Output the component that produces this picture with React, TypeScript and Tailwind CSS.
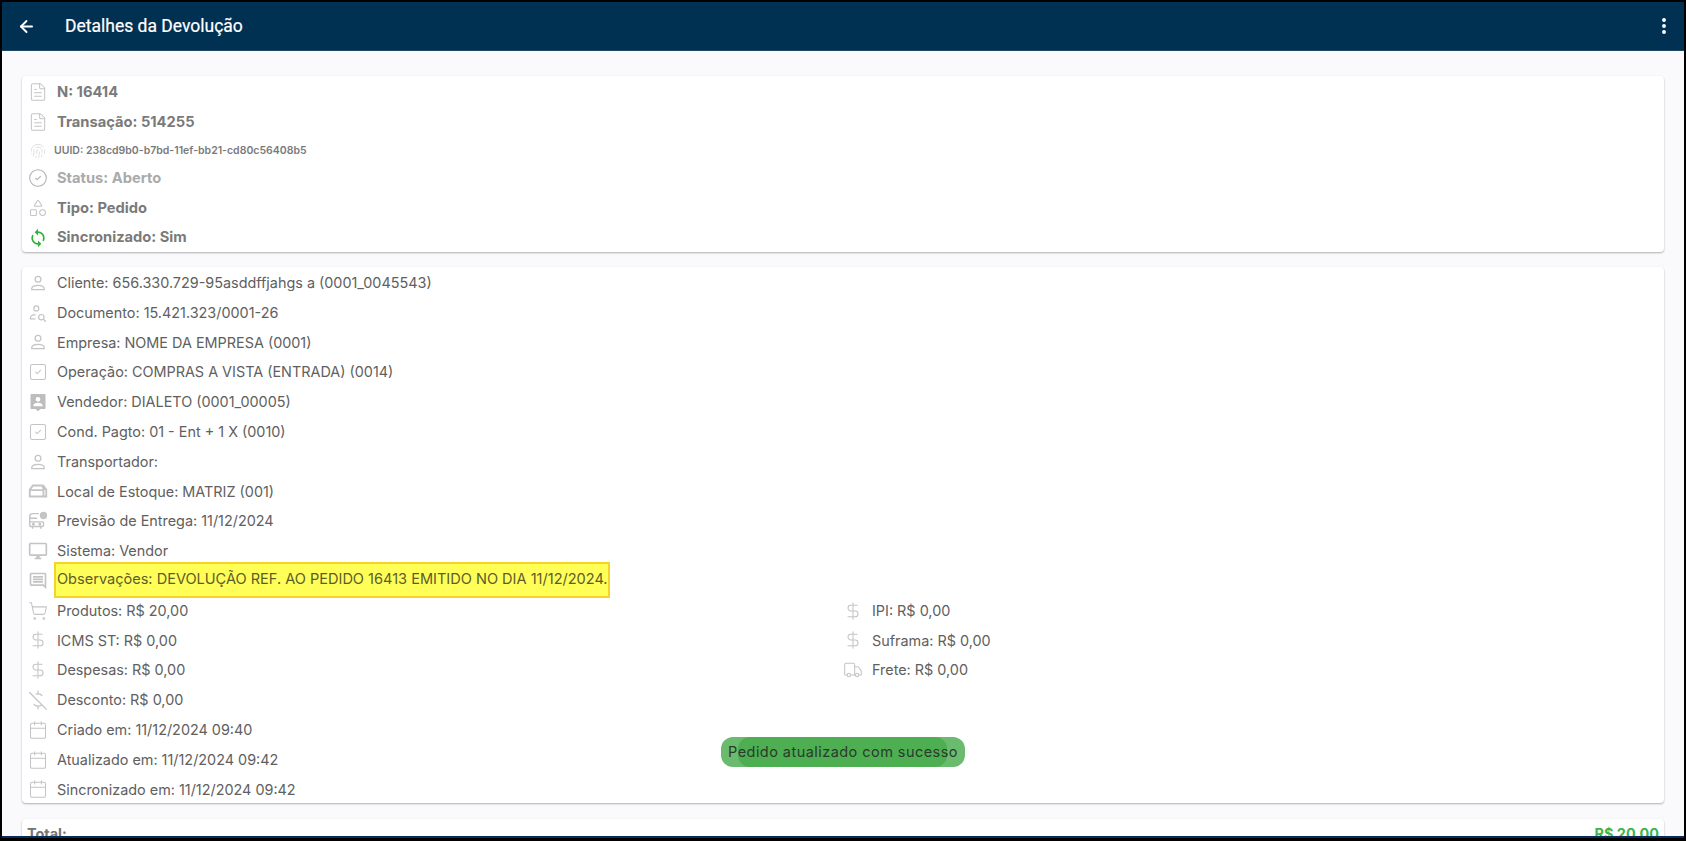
import React from "react";
import { ArrowLeft, FileText, Fingerprint, CircleCheck, Shapes, SquareCheck, ShoppingCart, DollarSign, Truck, Calendar } from "lucide-react";

const ic = "w-[20px] h-[20px] text-[#c4c4c4]";
const sw = 1.25;

function Person() {
  return (
    <svg viewBox="0 0 24 24" className={ic} fill="none" stroke="currentColor" strokeWidth={1.5}>
      <circle cx="12" cy="7.500" r="3.500" />
      <path d="M4.500 20v-1.500c0-2.300 3.800-3.800 7.500-3.800s7.500 1.500 7.500 3.800V20z" />
    </svg>
  );
}

function PersonSearch() {
  return (
    <svg viewBox="0 0 24 24" className={ic} fill="none" stroke="currentColor" strokeWidth={1.4}>
      <circle cx="10" cy="6.500" r="3" />
      <path d="M9 19H3v-1.500c0-2.200 3-3.500 6-3.500" />
      <circle cx="16" cy="17" r="3.200" />
      <path d="M18.500 19.500L21.500 22.500" />
    </svg>
  );
}

function ContactFilled() {
  return (
    <svg viewBox="0 0 24 24" className="w-[20px] h-[20px] text-[#bdbdbd]" fill="currentColor">
      <path d="M4 2.500h16a1 1 0 0 1 1 1v16a1 1 0 0 1-1 1h-5l-3 2.500-3-2.500H4a1 1 0 0 1-1-1v-16a1 1 0 0 1 1-1zm8 3.500a2.800 2.800 0 1 0 0 5.600 2.800 2.800 0 0 0 0-5.600zM6.500 17h11v-1c0-2-3.700-3-5.500-3s-5.500 1-5.500 3v1z" fillRule="evenodd" />
    </svg>
  );
}

function SyncIcon() {
  return (
    <svg viewBox="0 0 24 24" className="w-[20px] h-[20px] text-[#2eb43c]" fill="currentColor">
      <path d="M12 4V1L8 5l4 4V6c3.310 0 6 2.690 6 6 0 1.010-.250 1.970-.700 2.800l1.460 1.460C19.540 15.030 20 13.570 20 12c0-4.420-3.580-8-8-8zm0 14c-3.310 0-6-2.690-6-6 0-1.010.250-1.970.700-2.800L5.240 7.740C4.460 8.970 4 10.430 4 12c0 4.420 3.580 8 8 8v3l4-4-4-4v3z" />
    </svg>
  );
}

function CommentIcon() {
  return (
    <svg viewBox="0 0 24 24" className={ic} fill="currentColor">
      <path d="M21.990 4c0-1.100-.890-2-1.990-2H4c-1.100 0-2 .900-2 2v12c0 1.100.900 2 2 2h14l4 4-.010-18zM20 4v13.170L18.830 16H4V4h16zM6 12h12v2H6zm0-3h12v2H6zm0-3h12v2H6z" />
    </svg>
  );
}

function DesktopIcon() {
  return (
    <svg viewBox="0 0 24 24" className={ic} fill="currentColor">
      <path d="M21 2H3c-1.100 0-2 .900-2 2v12c0 1.100.900 2 2 2h7v2H8v2h8v-2h-2v-2h7c1.100 0 2-.900 2-2V4c0-1.100-.900-2-2-2zm0 14H3V4h18v12z" />
    </svg>
  );
}

function StockIcon() {
  return (
    <svg viewBox="0 0 24 24" className="w-[22px] h-[22px] text-[#c4c4c4]" fill="currentColor">
      <path d="M6 5h12l4 5v9H2v-9zM7 7l-2.400 3H17l-1-3zM4 12v5h13v-5zM19 11v6h1v-6z" fillRule="evenodd" />
    </svg>
  );
}

function DeliveryIcon() {
  return (
    <svg viewBox="0 0 24 24" className="w-[22px] h-[22px] text-[#c4c4c4]" fill="none" stroke="currentColor" strokeWidth={1.5}>
      <path d="M13 4H6a3 3 0 0 0-3 3v10a1 1 0 0 0 1 1h13a1 1 0 0 0 1-1v-4" />
      <path d="M3 9h8M3 13h15M6 18v2.500M15 18v2.500" />
      <circle cx="7" cy="15.500" r=".8" fill="currentColor" />
      <circle cx="14" cy="15.500" r=".8" fill="currentColor" />
      <circle cx="18" cy="6" r="4" fill="currentColor" stroke="none" />
    </svg>
  );
}

function DollarOff() {
  return (
    <svg viewBox="0 0 24 24" className="w-[22px] h-[22px] text-[#c4c4c4]" fill="none" stroke="currentColor" strokeWidth={1.4}>
      <path d="M2.500 3.500l19 19" />
      <path d="M12 2v3.500M12 18.500V22M16.500 7.500C15.800 6 14.200 5.200 12 5.200c-1 0-1.800.2-2.500.5M7.500 16.500c.7 1.300 2.300 2.200 4.500 2.200 1.600 0 3-.5 3.800-1.300" />
    </svg>
  );
}

function Row({ icon, children, cls = "", h = "h-[29.8px]" }: { icon: React.ReactNode; children: React.ReactNode; cls?: string; h?: string }) {
  return (
    <div className={`flex items-center ${h} ${cls}`}>
      <span className="w-[22px] flex justify-center shrink-0">{icon}</span>
      <span className="ml-[8px] whitespace-nowrap">{children}</span>
    </div>
  );
}

export default function App() {
  return (
    <div className="h-[841px] w-[1686px] overflow-hidden bg-black pt-[2px] px-[2px] pb-[3px] [font-family:Inter,sans-serif]">
      <div className="relative h-full flex flex-col bg-[#fafafd] overflow-hidden border-b-2 border-[#0a2a5c]">
        <header className="h-[49px] shrink-0 bg-[#003153] flex items-center text-white border-b border-[#1d4565]">
          <ArrowLeft className="ml-[15px] w-[19px] h-[19px]" strokeWidth={2.4} />
          <span className="ml-[29px] text-[17.5px] font-normal [font-family:Roboto,sans-serif] [-webkit-text-stroke:0.2px_white]">Detalhes da Devolução</span>
          <svg viewBox="0 0 24 24" className="ml-auto mr-[9px] w-[22px] h-[22px]" fill="currentColor">
            <circle cx="12" cy="5.500" r="2.100" />
            <circle cx="12" cy="12" r="2.100" />
            <circle cx="12" cy="18.500" r="2.100" />
          </svg>
        </header>

        <main className="flex-1 px-[20px] pt-[25px] flex flex-col gap-[15px] overflow-hidden">
          <section className="bg-white rounded-[4px] shadow-[0_1px_2px_rgba(0,0,0,0.3)] pl-[5px] pt-[1px] h-[176px] shrink-0 text-[14.7px] font-bold text-[#7a7a7a]">
            <Row h="h-[30px]" icon={<FileText className={ic} strokeWidth={sw} />}>N: 16414</Row>
            <Row h="h-[30px]" icon={<FileText className={ic} strokeWidth={sw} />}>Transação: 514255</Row>
            <Row h="h-[26px]" cls="text-[10.5px] !font-semibold pt-[1px]" icon={<Fingerprint className="w-[16px] h-[16px] text-[#d8d8d8]" strokeWidth={sw} />}><span className="-ml-[3px]">UUID: 238cd9b0-b7bd-11ef-bb21-cd80c56408b5</span></Row>
            <Row h="h-[30px]" cls="text-[#aaaaaa]" icon={<CircleCheck className="w-[20px] h-[20px] text-[#b0b0b0]" strokeWidth={sw} />}>Status: Aberto</Row>
            <Row h="h-[30px]" icon={<Shapes className={ic} strokeWidth={sw} />}>Tipo: Pedido</Row>
            <Row h="h-[29px]" icon={<SyncIcon />}>Sincronizado: Sim</Row>
          </section>

          <section className="bg-white rounded-[4px] shadow-[0_1px_2px_rgba(0,0,0,0.3)] pl-[5px] pt-[1px] h-[536px] mb-[1px] shrink-0 text-[14.4px] text-[#606060]">
            <Row icon={<Person />}>Cliente: 656.330.729-95asddffjahgs a (0001_0045543)</Row>
            <Row icon={<PersonSearch />}>Documento: 15.421.323/0001-26</Row>
            <Row icon={<Person />}>Empresa: NOME DA EMPRESA (0001)</Row>
            <Row icon={<SquareCheck className={ic} strokeWidth={sw} />}>Operação: COMPRAS A VISTA (ENTRADA) (0014)</Row>
            <Row icon={<ContactFilled />}>Vendedor: DIALETO (0001_00005)</Row>
            <Row icon={<SquareCheck className={ic} strokeWidth={sw} />}>Cond. Pagto: 01 - Ent + 1 X (0010)</Row>
            <Row icon={<Person />}>Transportador:</Row>
            <Row icon={<StockIcon />}>Local de Estoque: MATRIZ (001)</Row>
            <Row icon={<DeliveryIcon />}>Previsão de Entrega: 11/12/2024</Row>
            <Row icon={<DesktopIcon />}>Sistema: Vendor</Row>
            <div className="flex items-center h-[29.8px]">
              <span className="w-[22px] flex justify-center shrink-0"><CommentIcon /></span>
              <span className="ml-[5px] -mt-[1px] whitespace-nowrap h-[36px] w-[556px] flex items-center pl-[1px] bg-[#ffff58] border-2 border-[#f5d42a] text-[#5c5c2a] relative z-10 text-[14.55px]">Observações: DEVOLUÇÃO REF. AO PEDIDO 16413 EMITIDO NO DIA 11/12/2024.</span>
            </div>
            <div className="grid grid-cols-[815px_1fr]">
              <Row icon={<ShoppingCart className={ic} strokeWidth={sw} />}>Produtos: R$ 20,00</Row>
              <Row icon={<DollarSign className={ic} strokeWidth={sw} />}>IPI: R$ 0,00</Row>
              <Row icon={<DollarSign className={ic} strokeWidth={sw} />}>ICMS ST: R$ 0,00</Row>
              <Row icon={<DollarSign className={ic} strokeWidth={sw} />}>Suframa: R$ 0,00</Row>
              <Row icon={<DollarSign className={ic} strokeWidth={sw} />}>Despesas: R$ 0,00</Row>
              <Row icon={<Truck className={ic} strokeWidth={sw} />}>Frete: R$ 0,00</Row>
            </div>
            <Row icon={<DollarOff />}>Desconto: R$ 0,00</Row>
            <Row icon={<Calendar className={ic} strokeWidth={sw} />}>Criado em: 11/12/2024 09:40</Row>
            <Row icon={<Calendar className={ic} strokeWidth={sw} />}>Atualizado em: 11/12/2024 09:42</Row>
            <Row icon={<Calendar className={ic} strokeWidth={sw} />}>Sincronizado em: 11/12/2024 09:42</Row>
          </section>

          <section className="bg-white rounded-[4px] shadow-[0_1px_2px_rgba(0,0,0,0.3)] px-[5px] pt-[4px] h-[50px] shrink-0 flex justify-between text-[14.4px] font-bold text-[#757575]">
            <span>Total:</span>
            <span className="text-[#3cb54a]">R$ 20,00</span>
          </section>
        </main>

        <div className="absolute left-[719px] top-[735px] w-[244px] h-[30px] rounded-[12px] bg-[#6abb6e] flex items-center justify-center text-[14.5px] tracking-[0.45px] text-[#2b3a2c] overflow-hidden">
          <span className="absolute left-[17px] w-[209px] top-0 bottom-0 rounded-[12px] bg-[#4dae52]" />
          <span className="relative whitespace-nowrap">Pedido atualizado com sucesso</span>
        </div>
      </div>
    </div>
  );
}
